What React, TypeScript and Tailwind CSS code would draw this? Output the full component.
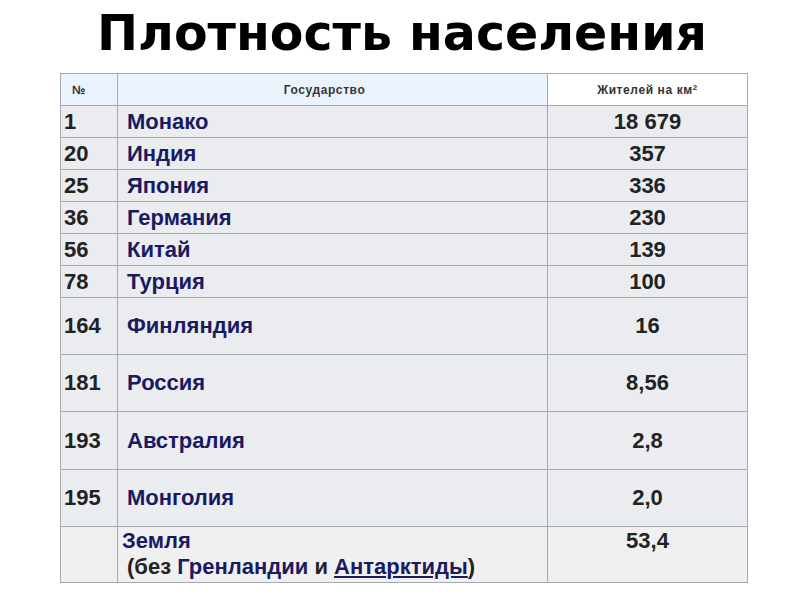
import React from "react";

const rows = [
  { n: "1", name: "Монако", v: "18 679", h: "h-[32px]" },
  { n: "20", name: "Индия", v: "357", h: "h-[32px]" },
  { n: "25", name: "Япония", v: "336", h: "h-[32px]" },
  { n: "36", name: "Германия", v: "230", h: "h-[32px]" },
  { n: "56", name: "Китай", v: "139", h: "h-[32px]" },
  { n: "78", name: "Турция", v: "100", h: "h-[32px]" },
  { n: "164", name: "Финляндия", v: "16", h: "h-[57px]" },
  { n: "181", name: "Россия", v: "8,56", h: "h-[57px]" },
  { n: "193", name: "Австралия", v: "2,8", h: "h-[58px]" },
  { n: "195", name: "Монголия", v: "2,0", h: "h-[57px]" },
];

function App() {
  return (
    <div className="w-[800px] h-[600px] bg-white overflow-hidden">
      {/* title */}
      <div className="h-[73px] flex items-center justify-center pb-[6px] pl-[4px]">
        <h1 className="font-['DejaVu_Sans',sans-serif] font-bold text-[49px] leading-none text-black">
          Плотность населения
        </h1>
      </div>

      <table className="ml-[60px] w-[687px] border-collapse table-fixed font-['Liberation_Sans',Arial,sans-serif] font-bold text-[22px] leading-[24px] text-[#222]">
        <colgroup>
          <col className="w-[57px]" />
          <col className="w-[430px]" />
          <col className="w-[200px]" />
        </colgroup>
        <thead>
          <tr className="h-[32px] text-[12px] leading-[16px] tracking-[0.6px] text-[#333]">
            <th className="border border-[#a2a9b1] bg-[#eaf3fd] text-left pl-[11px] font-bold">№</th>
            <th className="border border-[#a2a9b1] bg-[#eaf3fd] text-center pr-[16px] font-bold">Государство</th>
            <th className="border border-[#a2a9b1] bg-white text-center font-bold">
              Жителей на км<sup className="text-[8px]">2</sup>
            </th>
          </tr>
        </thead>
        <tbody>
          {rows.map((r) => (
            <tr key={r.n} className={r.h}>
              <td className="border border-[#a2a9b1] bg-[#eaecf0] pl-[3px] py-0">{r.n}</td>
              <td className="border border-[#a2a9b1] bg-[#eaecf0] pl-[9px] py-0 text-[#1a1a60]">{r.name}</td>
              <td className="border border-[#a2a9b1] bg-[#eaecf0] text-center py-0">{r.v}</td>
            </tr>
          ))}
          <tr className="h-[56px] align-top">
            <td className="border border-[#a2a9b1] bg-[#f0f0f0]"></td>
            <td className="border border-[#a2a9b1] bg-[#f0f0f0] pl-[4px] pt-[1px] pb-0 leading-[26px]">
              <div className="text-[#1a1a60]">Земля</div>
              <div className="pl-[5px]">
                (без <span className="text-[#1a1a60]">Гренландии</span> и{" "}
                <span className="text-[#1a1a60] underline">Антарктиды</span>)
              </div>
            </td>
            <td className="border border-[#a2a9b1] bg-[#f0f0f0] text-center pt-[1px] pb-0 leading-[26px]">53,4</td>
          </tr>
        </tbody>
      </table>
    </div>
  );
}

export default App;
